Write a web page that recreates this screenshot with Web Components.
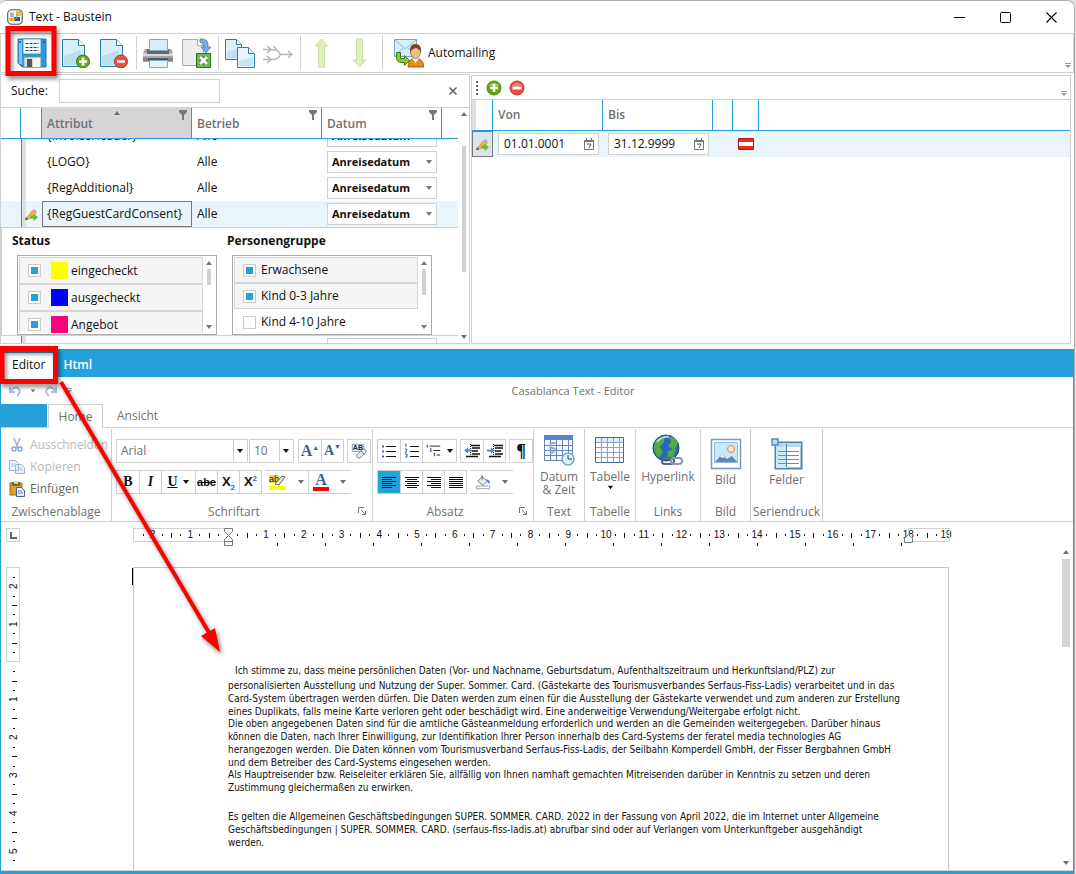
<!DOCTYPE html>
<html lang="de">
<head>
<meta charset="utf-8">
<title>Text - Baustein</title>
<style>
html,body{height:100%}
body{margin:0;background:#e4e4e4;font:12px/16px "Open Sans","Noto Sans",sans-serif;color:#111;overflow:hidden;
--blue:#26a0da;--line:#d0d0d0;--sel:#e9f4fb;--muted:#707070}
</style>
</head>
<body>
<app-window></app-window>
<script>
const icons = {
app:['0 0 16 16','<rect x=".7" y=".7" width="14.6" height="14.6" rx="4" fill="#f8f5e2" stroke="#555" stroke-width="1.1"/><path d="M3 4h4v4H3z" fill="#8fc1cf"/><path d="M9 2h5v5H9z" fill="#e9c22e"/><path d="M2 9h5l1 3H3z" fill="#dfae32"/><path d="M7 8h6v4H8z" fill="#275a8b"/><path d="M4 3l1 7M10 4l-1 6" stroke="#9aa8ad"/>'],
save:['0 0 30 30','<path d="M1 1h28v28H5l-4-4z" fill="#2d9bd8" stroke="#1878b4"/><path d="M2 2h3v24H2z" fill="#79c8ef"/><path d="M6 1h18v15H6z" fill="#eef7fb" stroke="#1679b2" stroke-width=".6"/><path d="M8.500 5.500h13M8.500 9.500h13M8.500 12.500h13" stroke="#444" stroke-dasharray="3 1"/><path d="M7 19h17v10H7z" fill="#d8dbe0" stroke="#888" stroke-width=".6"/><path d="M10 21h5v8h-5z" fill="#4c5868"/><path d="M16 20h7v9h-7z" fill="#f6f6f6"/><circle cx="3" cy="4" r="1" fill="#075b97"/><circle cx="27" cy="4" r="1" fill="#075b97"/>'],
add:['0 0 30 30','<path d="M1.500 1.500h16l6 6v21h-22z" fill="#d8eef8" stroke="#257fa9"/><path d="M3 18L20 12v15H3z" fill="#b9dff1"/><path d="M17.500 1.500v6h6" fill="#fff" stroke="#257fa9"/><circle cx="22" cy="23.500" r="6.500" fill="#69a916" stroke="#3c7208"/><path d="M22 19.500v8M18 23.500h8" stroke="#fff" stroke-width="2.600"/>'],
remove:['0 0 30 30','<path d="M1.500 1.500h16l6 6v21h-22z" fill="#d8eef8" stroke="#257fa9"/><path d="M3 18L20 12v15H3z" fill="#b9dff1"/><path d="M17.500 1.500v6h6" fill="#fff" stroke="#257fa9"/><circle cx="22" cy="23.500" r="6.500" fill="#e85243" stroke="#b42b20"/><path d="M18 23.500h8" stroke="#fff" stroke-width="2.600"/>'],
print:['0 0 30 30','<path d="M2 11h26l2 4v9H0v-9z" fill="#a5a5a7"/><path d="M0 15h30v3H0z" fill="#d7d7d7"/><path d="M4 11h22v5H4z" fill="#666"/><path d="M6.500 1.500h18v11h-18z" fill="#d8ecf9" stroke="#78abd0"/><path d="M0 20h30v3H0z" fill="#858587"/><path d="M5 20h20v3H5z" fill="#555"/><path d="M6.500 22.500h18v7h-18z" fill="#e2f2fb" stroke="#78abd0"/>'],
excel:['0 0 30 30','<path d="M1.500 1.500h15l6 6v20h-21z" fill="#ededed" stroke="#aaa"/><path d="M16.500 1.500v6h6" fill="#fff" stroke="#aaa"/><path d="M19 1q9-1 8 8h3l-5 6-5-6h3q0-4-4-5z" fill="#72ace2" stroke="#397bb7" stroke-width=".7"/><path d="M15.500 15.500h14v14h-14z" fill="#579c39" stroke="#2e7321"/><path d="M17 17h11v11H17z" fill="none" stroke="#9ac980"/><path d="M19 19l7 7m0-7l-7 7" stroke="#fff" stroke-width="2.600"/>'],
copyDocs:['0 0 30 30','<path d="M.5 1.500h11l5 5v15H.5z" fill="#dceffa" stroke="#257fa9"/><path d="M2 14l13-4v10H2z" fill="#bfe0f2"/><path d="M11.500 1.500v5h5" fill="#fff" stroke="#257fa9"/><path d="M12.500 9.500h11l6 6v14h-17z" fill="#e7f6fc" stroke="#257fa9"/><path d="M14 23l14-4v9H14z" fill="#c5e5f4"/><path d="M23.500 9.500v6h6" fill="#fff" stroke="#257fa9"/>'],
merge:['0 0 30 30','<path d="M0 11.500h8q6 0 8 2.500 2 2.500 0 5-2 2.500-7 2.500H0M17 16.500h12M4 8l4 3.500L4 15M4 18l4 3.500L4 25M25 13l4 3.500-4 3.500M10 8l4 3.500" fill="none" stroke="#b7b7b7" stroke-width="1.500"/>'],
up:['0 0 30 30','<path d="M14.500 1l6 7h-3v22h-6V8h-3z" fill="#e0efbb" stroke="#c7dda1"/>'],
down:['0 0 30 30','<path d="M11.500 1h6v21h3l-6 7-6-7h3z" fill="#e0efbb" stroke="#c7dda1"/>'],
mail:['0 0 30 30','<path d="M.5 1.500h22v17H.5z" fill="#d6edfc" stroke="#68a9d3"/><path d="M1 2l10.500 9L22 2M1 18l8-8M22 18l-8-8" fill="none" stroke="#86bee0"/><path d="M14 29q0-9 7.500-9T30 29z" fill="#e38e22" stroke="#ad6213"/><path d="M18 20l3.500 5 3.500-5z" fill="#fff"/><ellipse cx="21.500" cy="14" rx="5" ry="6.500" fill="#efbc82" stroke="#76461f" stroke-width=".6"/><path d="M16 15q-1-9 5.500-9T27 15q-1-4-5-5-5 1-6 5z" fill="#7c481f"/><path d="M2.500 14.500h4v6h4v-3l5 5-5 5v-3q-8 1-8-5z" fill="#8dc82a" stroke="#427817"/>'],
plus:['0 0 16 16','<circle cx="8" cy="8" r="7" fill="#61a60b" stroke="#4a860e"/><path d="M2.500 6q5.500-7 11 0z" fill="#9fd049"/><path d="M8 4v8M4 8h8" stroke="#fff" stroke-width="2.500"/>'],
minus:['0 0 16 16','<circle cx="8" cy="8" r="7" fill="#e94b42" stroke="#c9352d"/><path d="M2.500 6q5.500-7 11 0z" fill="#f18178"/><path d="M3.500 8h9" stroke="#fff" stroke-width="3"/>'],
pencil:['0 0 12 12','<path d="M1 10L7 2l3 3-6 5z" fill="#f4b13f" stroke="#d0934a" stroke-width=".7"/><path d="M7 2l3 3 1-1-2-3z" fill="#c9a0cf"/><path d="M0 11l1-3 2 3z" fill="#5a6a38"/><path d="M5 7h3V5l4 3.500L8 12v-2H5z" fill="#6fba2d"/>'],
cal:['0 0 12 14','<path d="M1.500 3.500h9v9h-9z" fill="#fff" stroke="#777"/><path d="M1 3h10v2H1zM3 1h1v2H3zM8 1h1v2H8z" fill="#777"/><path d="M4 7h4L6 11" fill="none" stroke="#555"/>'],
flag:['0 0 16 12','<path d="M.5.5h15v11H.5z" fill="#fff" stroke="#a71914"/><path d="M1 1h14v3H1zM1 8h14v3H1z" fill="#f22a20"/>'],
undo:['0 0 14 12','<path d="M2 2v5h5M3 6q3-5 7-3 4 4-1 8" fill="none" stroke="#a7bfe3" stroke-width="2"/>'],
redo:['0 0 14 12','<path d="M12 2v5H7M11 6Q8 1 4 3 0 7 5 11" fill="none" stroke="#a7bfe3" stroke-width="2"/>'],
cut:['0 0 16 16','<path d="M5 1l4 10M11 1L7 11" stroke="#a9b3c2" stroke-width="1.500"/><circle cx="5" cy="12" r="2" fill="none" stroke="#87a5d4" stroke-width="1.500"/><circle cx="11" cy="12" r="2" fill="none" stroke="#87a5d4" stroke-width="1.500"/>'],
copy:['0 0 16 16','<path d="M.5 1.500h6l3 3v7h-9zM6.500 5.500h6l3 3v6h-9z" fill="#edf4ff" stroke="#9db4d8"/><path d="M2 5h5M2 7h4M8 9h5M8 11h6" stroke="#b3c8e8"/>'],
paste:['0 0 16 16','<path d="M1 2h12v12H1z" fill="#dca130" stroke="#9d6b13"/><path d="M3 1h8v4H3z" fill="#666"/><path d="M5 0h4v3H5z" fill="#f6d260"/><path d="M7.500 6.500h5l3 3v6h-8z" fill="#e7f1fb" stroke="#40628d"/><path d="M9 10h4M9 12h5" stroke="#7593bc"/>'],
clear:['0 0 18 18','<path d="M1.500 1.500h13v8h-13z" fill="#e7f0fa" stroke="#8d9eb7"/><text x="2" y="8" font-family="Liberation Sans" font-size="8" font-weight="bold" fill="#222">AB</text><path d="M7 13l6-6q4-1 4 3l-7 7q-5 0-3-4z" fill="#e2edf9" stroke="#52749e"/><path d="M11 9l4 4" stroke="#52749e"/>'],
bullets:['0 0 16 16','<path d="M5 3.500h10M5 8.500h10M5 13.500h10" stroke="#111"/><path d="M1 2.500h2v2H1zM1 7.500h2v2H1zM1 12.500h2v2H1z" fill="#4066aa"/>'],
numbers:['0 0 16 16','<path d="M6 3.500h9M6 8.500h9M6 13.500h9" stroke="#111"/><path d="M1 1h1v3M1 6h2v1L1 9h2M1 11h2v1H2h1v2H1" fill="none" stroke="#3966a6"/>'],
levels:['0 0 18 16','<path d="M4 2.500h12M8 7.500h8M12 12.500h4" stroke="#111"/><path d="M1.500 1v3M5.500 5v4M9.500 10v4" stroke="#3966a6" stroke-width="1.500"/>'],
outdent:['0 0 16 16','<path d="M7 2.500h9M8 5h8M8 8h6M8 11h8M2 13.500h12" stroke="#111" stroke-width="1.500"/><path d="M6.500 1v14" stroke="#111" stroke-dasharray="1 1"/><path d="M0 7.500l4-3v2h4v2H4v2z" fill="#4f86ce"/>'],
indent:['0 0 16 16','<path d="M7 2.500h9M8 5h8M8 8h6M8 11h8M2 13.500h12" stroke="#111" stroke-width="1.500"/><path d="M6.500 1v14" stroke="#111" stroke-dasharray="1 1"/><path d="M8 7.500l-4-3v2H0v2h4v2z" fill="#4f86ce"/>'],
left:['0 0 16 14','<path d="M1 2.500h14M1 4.500h10M1 6.500h14M1 8.500h10M1 10.500h14M1 12.500h10" stroke="#111"/>'],
center:['0 0 16 14','<path d="M1 2.500h14M3 4.500h10M1 6.500h14M3 8.500h10M1 10.500h14M3 12.500h10" stroke="#111"/>'],
right:['0 0 16 14','<path d="M1 2.500h14M5 4.500h10M1 6.500h14M5 8.500h10M1 10.500h14M5 12.500h10" stroke="#111"/>'],
justify:['0 0 16 14','<path d="M1 2.500h14M1 4.500h14M1 6.500h14M1 8.500h14M1 10.500h14M1 12.500h14" stroke="#111"/>'],
bucket:['0 0 18 16','<path d="M3 7l5-5 6 5-5 5z" fill="#e2edf8" stroke="#52749e"/><path d="M8 0v6" stroke="#555"/><path d="M13 5q5 1 3 6-1-3-3-4z" fill="#547aba"/><path d="M1.500 12.500h15v3h-15z" fill="#fff" stroke="#999"/>'],
marker:['0 0 18 16','<path d="M0 1h10v8H0z" fill="#e4e44a"/><text x="0" y="8" font-family="Liberation Sans" font-size="9" fill="#111">ab</text><path d="M6 10l7-8 3 1-6 8z" fill="#dae8f7" stroke="#666"/><path d="M0 12h17v4H0z" fill="#ff0"/>'],
calendar:['0 0 32 32','<path d="M1.500 1.500h28v25h-28z" fill="#f4f8fe" stroke="#6785b9"/><path d="M1 1h29v5H1z" fill="#5a83d0"/><path d="M7.500 6v20M13.500 6v20M19.500 6v20M25.500 6v20M1 11.500h28M1 16.500h28M1 21.500h28" stroke="#6785b9"/><path d="M12.500 9H7.500v5h3q4 3-3 5" fill="none" stroke="#8ea9dd" stroke-width="2"/><circle cx="25" cy="25" r="6" fill="#d9effa" stroke="#72a8cf" stroke-width="1.500"/><path d="M25 21v4h4" fill="none" stroke="#345"/>'],
table:['0 0 32 32','<path d="M1.500 3.500h28v25h-28z" fill="#fff" stroke="#446796"/><path d="M2 4h27v4H2z" fill="#e1edfa"/><path d="M7.500 4v24M13.500 4v24M19.500 4v24M25.500 4v24M2 8.500h27M2 13.500h27M2 18.500h27M2 23.500h27" stroke="#8aa3c4"/>'],
globe:['0 0 32 32','<circle cx="14" cy="14" r="13" fill="#246ab8" stroke="#174782"/><path d="M3 8q6-7 10-5l-1 5-4 5 3 5-4 6Q0 18 3 8M17 3q7-1 9 6l-4 7-6-4 3-4zM16 17l8-2-3 9-6 2z" fill="#58a941"/><path d="M5 8q5-6 12-5" stroke="#9bd7ff" stroke-width="2" fill="none"/><rect x="10" y="24" width="12" height="6" rx="3" fill="none" stroke="#586675" stroke-width="2"/><rect x="19" y="24" width="11" height="6" rx="3" fill="none" stroke="#8b98a7" stroke-width="2"/>'],
image:['0 0 32 32','<path d="M1.500 1.500h29v29h-29z" fill="#fff" stroke="#7a99b6" stroke-width="1.500"/><path d="M4.500 4.500h23v20h-23z" fill="#c6e9fb" stroke="#91bbdd"/><circle cx="21" cy="11" r="3.500" fill="#ffe0c4" stroke="#e98951"/><path d="M5 24l7-8 5 5 5-3 5 6z" fill="#6286bb"/><path d="M10 19l2-3 3 4z" fill="#fff"/>'],
fields:['0 0 32 32','<path d="M4.500 4.500h26v26h-26z" fill="#fff" stroke="#58829f" stroke-width="2"/><path d="M5 5h25v4H5z" fill="#b6d9ee"/><path d="M5 9h10v21H5z" fill="#c9eaf7"/><path d="M7 13.500h21M7 17.500h21M7 21.500h21M7 25.500h21" stroke="#888"/><path d="M15.500 6v23" stroke="#58829f"/><path d="M1 1h6v6H1z" fill="#b9e1fa" stroke="#4b91bc" stroke-width="1.500"/>'],
launch:['0 0 8 8','<path d="M.5 6V.5H6M3 3l4 4M7.500 4v3.500H4" fill="none" stroke="#777"/>'],
tri:['0 0 8 8','<path d="M1 2h6L4 6z" fill="currentColor"/>'],
triUp:['0 0 8 8','<path d="M1 6h6L4 2z" fill="currentColor"/>'],
funnel:['0 0 8 10','<path d="M0 0h8v2L5 5v5H3V5L0 2z" fill="#777"/>'],
close:['0 0 8 8','<path d="M.5.5l7 7m0-7l-7 7" stroke="#555" stroke-width="1.400"/>'],
more:['0 0 6 6','<path d="M0 .5h6" stroke="#999"/><path d="M0 2h6L3 5z" fill="#999"/>'],
winMin:['0 0 11 11','<path d="M0 5.500h11" stroke="#000"/>'],
winMax:['0 0 11 11','<rect x=".5" y=".5" width="10" height="10" rx="1" fill="none" stroke="#000"/>'],
winClose:['0 0 11 11','<path d="M.5.5l10 10M10.500.5l-10 10" stroke="#000" stroke-width="1.100"/>']
};
const base = `*{box-sizing:border-box}button{font:inherit;color:inherit;background:none;border:0;padding:0;margin:0;display:inline-flex;align-items:center;justify-content:center}input,select{font:inherit;color:inherit;margin:0;border-radius:0}`;
function define(tag, css, html, init){
  customElements.define(tag, class extends HTMLElement{
    constructor(){
      super();
      const t=document.createElement('template');
      t.innerHTML=`<style>${base}${css}</style>${typeof html==='function'?html(this):html}`;
      this.attachShadow({mode:'open'}).append(t.content.cloneNode(true));
    }
    connectedCallback(){ if(init) init(this.shadowRoot,this); }
  });
}
define('ui-icon',`:host{display:inline-block;width:16px;height:16px;flex:none}svg{display:block;width:100%;height:100%}`,'',(r,el)=>{
  const [box,body]=icons[el.getAttribute('name')];
  r.innerHTML+=`<svg viewBox="${box}" aria-hidden="true">${body}</svg>`;
});
define('ui-select',`:host{display:grid;height:22px;border:1px solid var(--line);background:#fff}
select,ui-icon{grid-area:1/1}select{appearance:none;border:0;background:none;padding:0 4px;min-width:0;width:100%;height:100%;opacity:1}
ui-icon{width:8px;height:8px;place-self:center end;margin-right:3px;color:#777;pointer-events:none}
:host([split]) select{padding-right:14px}:host([split]) ui-icon{color:#111}
:host([split])::after{content:"";grid-area:1/1;justify-self:end;width:13px;border-left:1px solid var(--line);pointer-events:none}`,
el=>`<select aria-label="${el.getAttribute('label')}"><option>${el.getAttribute('value')}</option></select><ui-icon name="tri"></ui-icon>`);
define('check-item',`:host{display:block}label{display:flex;align-items:center;height:var(--item-height,26px);padding:0 8px;border:1px solid transparent}
:host([checked]) label{background:#f5f5f5;border-color:#d6d6d6}
input{appearance:none;width:13px;height:13px;border:1px solid #ccc;background:#fff;display:grid;place-items:center;flex:none}
input:checked::before{content:"";width:7px;height:7px;background:var(--blue)}
i{width:17px;height:17px;margin-left:10px;margin-right:-2px;flex:none}span{margin-left:5px}`,
el=>`<label><input type="checkbox" ${el.hasAttribute('checked')?'checked':''}>${el.hasAttribute('color')?`<i style="background:${el.getAttribute('color')}"></i>`:''}<span><slot></slot></span></label>`);
define('check-list',`:host{display:flex;width:200px;height:80px;border:1px solid #aaa;background:#fff;padding:1px;overflow:hidden}
.items{flex:1;overflow:hidden}.bar{width:12px;display:flex;flex-direction:column;align-items:center;color:#777;padding:2px 0}
.bar ui-icon{width:8px;height:8px}.thumb{width:4px;height:var(--thumb,26px);background:#d0d0d0;margin:2px 0 auto}`,
`<div class="items"><slot></slot></div><div class="bar"><ui-icon name="triUp"></ui-icon><div class="thumb"></div><ui-icon name="tri"></ui-icon></div>`);
define('title-bar',`:host{display:flex;height:32px;align-items:center;padding-left:7px;background:#fff}
h1{font:inherit;margin:0 auto 0 6px}button{width:46px;height:32px}button ui-icon{width:11px;height:11px}`,
`<ui-icon name="app"></ui-icon><h1>Text - Baustein</h1>
<button aria-label="Minimieren"><ui-icon name="winMin"></ui-icon></button><button aria-label="Maximieren"><ui-icon name="winMax"></ui-icon></button><button aria-label="Schließen"><ui-icon name="winClose"></ui-icon></button>`);
define('main-toolbar',`:host{display:flex;height:40px;border:1px solid var(--line);padding-left:12px;align-items:center}
button{width:38px;height:38px}button ui-icon{width:30px;height:30px}i{width:1px;height:34px;background:var(--line);margin:0 2px 0 3px}
.first{margin-right:6px}.mail{width:auto;margin-left:9px;gap:4px}.more{width:6px;height:6px;margin:auto 2px 3px auto}`,
`<button class="first" aria-label="Speichern"><ui-icon name="save"></ui-icon></button><button aria-label="Neu"><ui-icon name="add"></ui-icon></button><button aria-label="Löschen"><ui-icon name="remove"></ui-icon></button><i></i>
<button aria-label="Drucken"><ui-icon name="print"></ui-icon></button><button aria-label="Excel-Export"><ui-icon name="excel"></ui-icon></button><i></i>
<button aria-label="Kopieren"><ui-icon name="copyDocs"></ui-icon></button><button aria-label="Zusammenführen"><ui-icon name="merge"></ui-icon></button><i></i>
<button aria-label="Nach oben"><ui-icon name="up"></ui-icon></button><button aria-label="Nach unten"><ui-icon name="down"></ui-icon></button><i></i>
<button class="mail"><ui-icon name="mail"></ui-icon>Automailing</button><ui-icon class="more" name="more"></ui-icon>`);
const row=(n,cls='')=>`<tr class="${cls}"><td></td><td class="ind">${cls?'<ui-icon name="pencil"></ui-icon>':''}</td><td class="name">${n}</td><td>Alle</td><td class="date"><ui-select label="Datum" value="Anreisedatum"></ui-select></td><td></td></tr>`;
define('attribute-pane',`:host{display:flex;flex-direction:column;border:1px solid var(--line);height:270px;background:#fff}
form{display:flex;height:33px;align-items:center;padding:0 12px 0 10px;border-bottom:1px solid var(--line);flex:none;margin:0}
form input{width:161px;height:24px;border:1px solid var(--line);margin-left:12px;margin-right:auto;padding:0 4px;outline:0}
form label{width:36px;white-space:nowrap}form button ui-icon{width:8px;height:8px}
.body{display:flex;flex:1;min-height:0}.view{flex:1;overflow:hidden}
table{border-spacing:0;width:100%;table-layout:fixed}
thead{position:sticky;top:0;z-index:1}
th{height:31px;background:#fff;border-right:1px solid var(--blue);border-bottom:1px solid var(--blue);text-align:left;padding:2px 4px 0 5px;color:var(--muted);font-weight:600}
th:last-child{border-right:0}th.sorted{background:#d6d4d5}th>div{display:flex;align-items:center;height:28px}th ui-icon{margin-left:auto;width:8px;height:10px;align-self:start}
th .sort{width:8px;height:8px;color:var(--muted);margin:-1px 0 0 20px}
td{height:26px;padding:0 5px}td.ind{border-left:1px solid #777;padding:0 0 0 3px;background-image:linear-gradient(90deg,#e0e0e0 4px,transparent 4px)}td ui-icon{display:block;width:13px;height:13px}
td.date{font-size:11px;font-weight:700}.on td{background-color:var(--sel)}.on .name{border:1px solid #777;padding:0 4px}
td.detail{height:109px;padding:0;border:1px solid var(--line);border-right:0;background:#fff;vertical-align:top}
.groups{display:flex;gap:10px;padding:5px 0 0 10px}h2{font:inherit;font-weight:700;margin:0 0 6px}section{width:205px}check-list{margin-left:5px}
.bar{width:11px;display:flex;flex-direction:column;align-items:center;color:var(--muted);padding:2px 0}.bar ui-icon{width:8px;height:8px}.thumb{width:4px;height:126px;background:#d0d0d0;margin:28px 0 auto}`,
`<form><label for="q">Suche:</label><input id="q" type="text"><button type="button" aria-label="Schließen"><ui-icon name="close"></ui-icon></button></form>
<div class="body"><div class="view"><table><colgroup><col style="width:20px"><col style="width:21px"><col style="width:150px"><col style="width:130px"><col style="width:120px"><col></colgroup>
<thead><tr><th></th><th></th><th class="sorted"><div>Attribut<ui-icon class="sort" name="triUp"></ui-icon><ui-icon name="funnel"></ui-icon></div></th><th><div>Betrieb<ui-icon name="funnel"></ui-icon></div></th><th><div>Datum<ui-icon name="funnel"></ui-icon></div></th><th></th></tr></thead>
<tbody>${row('{InvoiceHeader}')}${row('{LOGO}')}${row('{RegAdditional}')}${row('{RegGuestCardConsent}','on')}
<tr><td class="detail" colspan="6"><div class="groups"><section><h2>Status</h2><check-list style="--item-height:27px;--thumb:16px"><check-item checked color="#ff0">eingecheckt</check-item><check-item checked color="#00f">ausgecheckt</check-item><check-item checked color="#ff0080">Angebot</check-item></check-list></section>
<section><h2>Personengruppe</h2><check-list><check-item checked>Erwachsene</check-item><check-item checked>Kind 0-3 Jahre</check-item><check-item>Kind 4-10 Jahre</check-item></check-list></section></div></td></tr>
<tr><td></td><td class="ind"></td><td></td><td></td><td class="date"><ui-select label="Datum" value=""></ui-select></td><td></td></tr></tbody></table></div><div class="bar"><ui-icon name="triUp"></ui-icon><div class="thumb"></div><ui-icon name="tri"></ui-icon></div></div>`,
r=>{r.querySelector('.view').scrollTop=16;});
define('date-field',`:host{display:flex;height:22px;border:1px solid var(--line);background:#fff;align-items:center;padding-right:3px}input{border:0;background:none;padding:0 5px;min-width:0;flex:1;outline:0}ui-icon{width:12px;height:14px}`,
el=>`<input type="text" aria-label="${el.getAttribute('label')}" value="${el.getAttribute('value')}"><button aria-label="Kalender"><ui-icon name="cal"></ui-icon></button>`);
define('period-pane',`:host{display:flex;flex-direction:column;border:1px solid var(--line);margin-right:3px;margin-top:1px;background:#fff}
.tools{display:flex;height:24px;align-items:center;padding:0 3px 0 4px;border-bottom:1px solid var(--line);gap:7px}
.grip{width:2px;height:14px;background:repeating-linear-gradient(#666 0 2px,transparent 2px 4px);margin-right:1px}.more{width:6px;height:6px;margin:auto 0 2px auto}
table{border-spacing:0;width:100%;table-layout:fixed}th{height:31px;border-right:1px solid var(--blue);border-bottom:1px solid var(--blue);text-align:left;color:var(--muted);font-weight:600;padding:0 5px}
th:last-child{border-right:0}th:first-child{background:linear-gradient(90deg,#e0e0e0 4px,transparent 4px)}
td{height:26px;background:var(--sel);padding:0 4px 0 5px}td:first-child{border:1px solid #777;padding:0 0 0 3px;background:#d9e4ec}td ui-icon{display:block;width:13px;height:13px}td .flag{width:16px;height:12px}`,
`<div class="tools"><div class="grip"></div><button aria-label="Hinzufügen"><ui-icon name="plus"></ui-icon></button><button aria-label="Entfernen"><ui-icon name="minus"></ui-icon></button><ui-icon class="more" name="more"></ui-icon></div>
<table><colgroup><col style="width:21px"><col style="width:110px"><col style="width:110px"><col style="width:20px"><col style="width:26px"><col></colgroup>
<thead><tr><th></th><th>Von</th><th>Bis</th><th></th><th></th><th></th></tr></thead>
<tbody><tr><td><ui-icon name="pencil"></ui-icon></td><td><date-field label="Von" value="01.01.0001"></date-field></td><td><date-field label="Bis" value="31.12.9999"></date-field></td><td></td><td><ui-icon class="flag" name="flag"></ui-icon></td><td></td></tr></tbody></table>`);
define('editor-tabs',`:host{display:flex;background:var(--blue);height:28px;align-items:end;padding-left:3px;flex:none}
button{height:24px;padding:0 8px;color:#fff;font-weight:600}button[aria-selected=true]{background:#fff;color:#111;font-weight:400;margin-right:2px}`,
`<button role="tab" aria-selected="true">Editor</button><button role="tab" aria-selected="false">Html</button>`);
define('ribbon-group',`:host{display:flex;flex-direction:column;border-right:1px solid var(--line);height:92px;margin-top:1px;padding:10px 4px 0;flex:none;color:var(--muted)}
.main{flex:1;min-height:0}footer{display:flex;justify-content:center;position:relative;height:17px;white-space:nowrap}:host([launch]) footer{padding-right:16px}ui-icon{position:absolute;right:2px;top:3px;width:8px;height:8px}`,
el=>`<div class="main"><slot></slot></div><footer>${el.getAttribute('label')}${el.hasAttribute('launch')?'<ui-icon name="launch"></ui-icon>':''}</footer>`);
define('editor-ribbon',`:host{display:block;flex:none;color:var(--muted)}
.quick{display:grid;grid-template-columns:80px 1fr 8px;height:27px;align-items:center;text-align:center;font-size:11px}.quick div{display:flex;align-items:center;gap:8px;padding-left:7px}.quick ui-icon{width:14px;height:12px}.quick .t{width:6px;height:6px}
.tabs{display:flex;height:23px}.tabs button{height:24px;padding:0 10px}.tabs .file{width:46px;background:var(--blue);height:23px;margin-right:1px}.tabs .cur{border:1px solid var(--line);border-bottom:0;background:#fff;width:55px;padding:0;margin-right:4px;position:relative}
.ribbon{display:flex;border:1px solid var(--line);border-width:1px 0;height:95px}
.clip{display:grid;gap:6px;padding:0 2px 0 4px;margin-top:-2px}.clip button{justify-content:start;gap:5px;height:16px;white-space:nowrap}.clip :disabled{color:#b8b8b8}.paste{color:#666}
.rows{display:grid;gap:7px}.rows>div{display:flex;height:24px}
.set{display:flex;border:1px solid var(--line);height:24px;margin-right:3px}.set button{width:22px;border-left:1px solid var(--line);color:#111}.set button:first-child{border-left:0}
.set button.w{width:34px;gap:4px}.set button.drop{width:43px;gap:10px;border-left:1px solid var(--line)}.set.open{border-left:0;border-right:0}.open button.drop:first-child{border-left:0}.t{width:8px;height:8px}.open .t{color:var(--muted)}
b,.it,.u{font:bold 14px/20px "Liberation Serif",serif}.it{font-style:italic}.u{text-decoration:underline}
.x{font:bold 13px/16px "Liberation Sans",sans-serif}.x sub,.x sup{font-size:8px;color:#3268ad;line-height:0}.abc{font:bold 11px/16px "Liberation Sans",sans-serif;text-decoration:line-through}
.A{font:bold 16px/18px "Liberation Serif",serif;color:#3e5f99}.A sup{font:7px/8px "Liberation Sans",sans-serif}.s{font-size:14px}.red{border-bottom:4px solid red;line-height:14px;padding:0 2px}
.pil{font:bold 18px/20px "Liberation Serif",serif}.active{background:var(--blue)}
.big{flex-direction:column;justify-content:start;width:100%;line-height:13px}.big ui-icon{width:32px;height:32px;margin:-5px 0 4px}.low ui-icon{margin:-1px 0 3px}.big .t{width:7px;height:7px;margin:1px;color:#111}
ui-select{height:24px}`,
`<div class="quick"><div><ui-icon name="undo"></ui-icon><ui-icon class="t" name="tri"></ui-icon><ui-icon name="redo"></ui-icon><ui-icon class="t" name="more"></ui-icon></div><span>Casablanca Text - Editor</span></div>
<div class="tabs"><button class="file" aria-label="Datei"></button><button class="cur">Home</button><button>Ansicht</button></div>
<div class="ribbon">
<ribbon-group label="Zwischenablage" style="width:111px"><div class="clip"><button disabled><ui-icon name="cut"></ui-icon>Ausschneiden</button><button disabled><ui-icon name="copy"></ui-icon>Kopieren</button><button class="paste"><ui-icon name="paste"></ui-icon>Einfügen</button></div></ribbon-group>
<ribbon-group label="Schriftart" launch style="width:261px"><div class="rows"><div><ui-select split label="Schrift" value="Arial" style="width:132px;margin-right:1px"></ui-select><ui-select split label="Größe" value="10" style="width:45px;margin-right:4px"></ui-select>
<div class="set"><button aria-label="Größer"><span class="A">A<sup>▲</sup></span></button><button aria-label="Kleiner"><span class="A s">A<sup>▼</sup></span></button></div><div class="set"><button aria-label="Formatierung löschen"><ui-icon name="clear"></ui-icon></button></div></div>
<div><div class="set"><button><b>B</b></button><button><span class="it">I</span></button><button class="w"><span class="u">U</span><ui-icon class="t" name="tri"></ui-icon></button><button><span class="abc">abc</span></button><button><span class="x">X<sub>2</sub></span></button><button><span class="x">X<sup>2</sup></span></button></div>
<div class="set open"><button class="drop" aria-label="Hervorheben"><ui-icon name="marker" style="width:18px"></ui-icon><ui-icon class="t" name="tri"></ui-icon></button><button class="drop"><span class="A red">A</span><ui-icon class="t" name="tri"></ui-icon></button></div></div></div></ribbon-group>
<ribbon-group label="Absatz" launch style="width:161px"><div class="rows"><div><div class="set"><button aria-label="Aufzählung"><ui-icon name="bullets"></ui-icon></button><button aria-label="Nummerierung"><ui-icon name="numbers"></ui-icon></button><button class="w" aria-label="Liste mit mehreren Ebenen"><ui-icon name="levels"></ui-icon><ui-icon class="t" name="tri"></ui-icon></button></div><div class="set"><button aria-label="Einzug verkleinern"><ui-icon name="outdent"></ui-icon></button><button aria-label="Einzug vergrößern"><ui-icon name="indent"></ui-icon></button></div><div class="set" style="margin:0"><button><span class="pil">¶</span></button></div></div>
<div><div class="set"><button class="active" aria-label="Linksbündig"><ui-icon name="left"></ui-icon></button><button aria-label="Zentriert"><ui-icon name="center"></ui-icon></button><button aria-label="Rechtsbündig"><ui-icon name="right"></ui-icon></button><button aria-label="Blocksatz"><ui-icon name="justify"></ui-icon></button></div><div class="set open"><button class="drop" aria-label="Schattierung"><ui-icon name="bucket"></ui-icon><ui-icon class="t" name="tri"></ui-icon></button></div></div></div></ribbon-group>
<ribbon-group label="Text" style="width:51px"><button class="big"><ui-icon name="calendar"></ui-icon><span>Datum</span><span>&amp; Zeit</span></button></ribbon-group>
<ribbon-group label="Tabelle" style="width:51px"><button class="big"><ui-icon name="table"></ui-icon>Tabelle<ui-icon class="t" name="tri"></ui-icon></button></ribbon-group>
<ribbon-group label="Links" style="width:65px"><button class="big"><ui-icon name="globe"></ui-icon>Hyperlink</button></ribbon-group>
<ribbon-group label="Bild" style="width:50px"><button class="big low"><ui-icon name="image"></ui-icon>Bild</button></ribbon-group>
<ribbon-group label="Seriendruck" style="width:72px"><button class="big low"><ui-icon name="fields"></ui-icon>Felder</button></ribbon-group>
</div>`);
define('cm-ruler',`:host{display:flex;font:10px/12px "Liberation Sans",Arial,sans-serif;color:#111;overflow:hidden}
.cell{flex:none;display:grid;place-items:center}:host(:not([vertical])) .cell{width:1cm;height:14px;grid-template-columns:repeat(4,1fr)}
:host([vertical]){flex-direction:column}:host([vertical]) .cell{height:1cm;width:14px;grid-template-rows:repeat(4,1fr)}
span{min-width:0;display:flex;justify-content:center;white-space:nowrap}i{width:1px;height:5px;background:#111}u{width:1px;height:2px;background:#111}
:host([vertical]) i{width:5px;height:1px}:host([vertical]) u{width:2px;height:1px}:host([vertical]) span{writing-mode:vertical-rl;transform:rotate(180deg);height:1px}:host(:not([vertical])) span{width:1px}
:host(:not([vertical])) .cell:last-child u:last-child{visibility:hidden}`,
'',(r,el)=>{let h='';for(let k=+el.getAttribute('from');k<=+el.getAttribute('to');k++)h+=`<div class="cell"><i></i><u></u><span>${Math.abs(k)||''}</span><u></u></div>`;r.innerHTML+=h;});
define('text-document',`:host{display:flex;flex-direction:column;flex:1;min-height:0;border-bottom:1px solid var(--line);background:#fff}
.top{position:relative;height:40px;flex:none;padding:6px 0 0 128px}.corner{position:absolute;left:5px;top:6px;width:14px;height:14px;border:1px solid var(--line);display:grid;place-items:center}.corner::after{content:"";width:5px;height:5px;border:solid #666;border-width:0 0 2px 2px}
.box{position:absolute;border:1px solid var(--line)}.m1{left:132px;top:6px;width:96px;height:14px}.m2{left:907px;top:6px;width:42px;height:14px}
.mark{position:absolute}.stops{position:absolute;left:276px;top:21px;width:625px;height:3px;background:repeating-linear-gradient(90deg,#111 0 1px,transparent 1px 48px)}
.work{display:flex;flex:1;min-height:0}.side{position:relative;width:132px;flex:none;overflow:hidden}.side cm-ruler{margin-left:6px;padding-top:1px;height:100%}
.side .box{left:5px;top:5px;width:14px;height:95px}.page{flex:none;width:816px;margin-top:5px;border:1px solid #c4c4c4;border-bottom:0;padding:96px 0 0 94px;position:relative;color:#111;font:10px/13px "DejaVu Sans Condensed","DejaVu Sans",Verdana,sans-serif}
.page p{margin:0 0 -1px;white-space:nowrap}.page .lead{margin-bottom:2px;text-indent:7px}.page .last{margin-top:17px}.caret{position:absolute;left:-2px;top:0;width:1px;height:17px;background:#000}
.bar{margin:-23px 3px 0 auto;display:flex;flex-direction:column;align-items:center;width:9px;color:var(--muted);z-index:1;padding:9px 0 3px}.bar ui-icon{width:8px;height:8px}.thumb{width:8px;height:88px;background:#d6d4d5;margin:3px 0 auto}`,
`<div class="top"><div class="corner"></div><div class="box m1"></div><div class="box m2"></div><cm-ruler from="-2" to="19"></cm-ruler><div class="stops"></div>
<svg class="mark" style="left:222px;top:6px" width="11" height="19"><path d="M1.500.5h8v3l-4 4 4 4v2h-8v-2l4-4-4-4zM1.500 13.500h8v4h-8z" fill="#fff" stroke="#777"/></svg>
<svg class="mark" style="left:902px;top:10px" width="11" height="12"><path d="M1.500 10.500v-4l4-4 4 4v4z" fill="#fff" stroke="#777"/></svg></div>
<div class="work"><div class="side"><div class="box"></div><cm-ruler vertical from="-2" to="5"></cm-ruler></div>
<article class="page"><div class="caret"></div>
<p class="lead">Ich stimme zu, dass meine persönlichen Daten (Vor- und Nachname, Geburtsdatum, Aufenthaltszeitraum und Herkunftsland/PLZ) zur</p>
<p>personalisierten Ausstellung und Nutzung der Super. Sommer. Card. (Gästekarte des Tourismusverbandes Serfaus-Fiss-Ladis) verarbeitet und in das<br>Card-System übertragen werden dürfen. Die Daten werden zum einen für die Ausstellung der Gästekarte verwendet und zum anderen zur Erstellung<br>eines Duplikats, falls meine Karte verloren geht oder beschädigt wird. Eine anderweitige Verwendung/Weitergabe erfolgt nicht.</p>
<p>Die oben angegebenen Daten sind für die amtliche Gästeanmeldung erforderlich und werden an die Gemeinden weitergegeben. Darüber hinaus<br>können die Daten, nach Ihrer Einwilligung, zur Identifikation Ihrer Person innerhalb des Card-Systems der feratel media technologies AG<br>herangezogen werden. Die Daten können vom Tourismusverband Serfaus-Fiss-Ladis, der Seilbahn Komperdell GmbH, der Fisser Bergbahnen GmbH<br>und dem Betreiber des Card-Systems eingesehen werden.</p>
<p>Als Hauptreisender bzw. Reiseleiter erklären Sie, allfällig von Ihnen namhaft gemachten Mitreisenden darüber in Kenntnis zu setzen und deren<br>Zustimmung gleichermaßen zu erwirken.</p>
<p class="last">Es gelten die Allgemeinen Geschäftsbedingungen SUPER. SOMMER. CARD. 2022 in der Fassung von April 2022, die im Internet unter Allgemeine<br>Geschäftsbedingungen | SUPER. SOMMER. CARD. (serfaus-fiss-ladis.at) abrufbar sind oder auf Verlangen vom Unterkunftgeber ausgehändigt<br>werden.</p></article>
<div class="bar"><ui-icon name="triUp"></ui-icon><div class="thumb"></div><ui-icon name="tri"></ui-icon></div></div>`);
define('callout-marks',`:host{position:absolute;left:0;top:0;pointer-events:none;z-index:5}svg{display:block;overflow:visible;filter:drop-shadow(2px 3px 2px #0007)}`,
`<svg width="240" height="670" aria-hidden="true"><path d="M8 27.500h46v45H8zM2 347.500h53.500v33H2z" fill="none" stroke="#f00" stroke-width="5"/><path d="M61 381l150 254" stroke="#f00" stroke-width="4"/><path d="M220 651l-19-16 14-8z" fill="#f00"/></svg>`);
define('app-window',`:host{display:flex;flex-direction:column;position:relative;height:100vh;margin-right:1px;border-top:1px solid #aaa;border-right:1px solid #aaa;border-radius:7px 8px 0 0;background:#fff;overflow:hidden}
.panes{display:grid;grid-template-columns:470px 1fr;column-gap:1px;margin-top:1px;flex:none}
.editor{display:flex;flex-direction:column;flex:1;min-height:0;margin-top:5px;border:solid var(--blue);border-width:0 1px 4px 1px}`,
`<title-bar></title-bar><main-toolbar></main-toolbar><div class="panes"><attribute-pane></attribute-pane><period-pane></period-pane></div>
<div class="editor"><editor-tabs></editor-tabs><editor-ribbon></editor-ribbon><text-document></text-document></div><callout-marks></callout-marks>`);
</script>
</body>
</html>
